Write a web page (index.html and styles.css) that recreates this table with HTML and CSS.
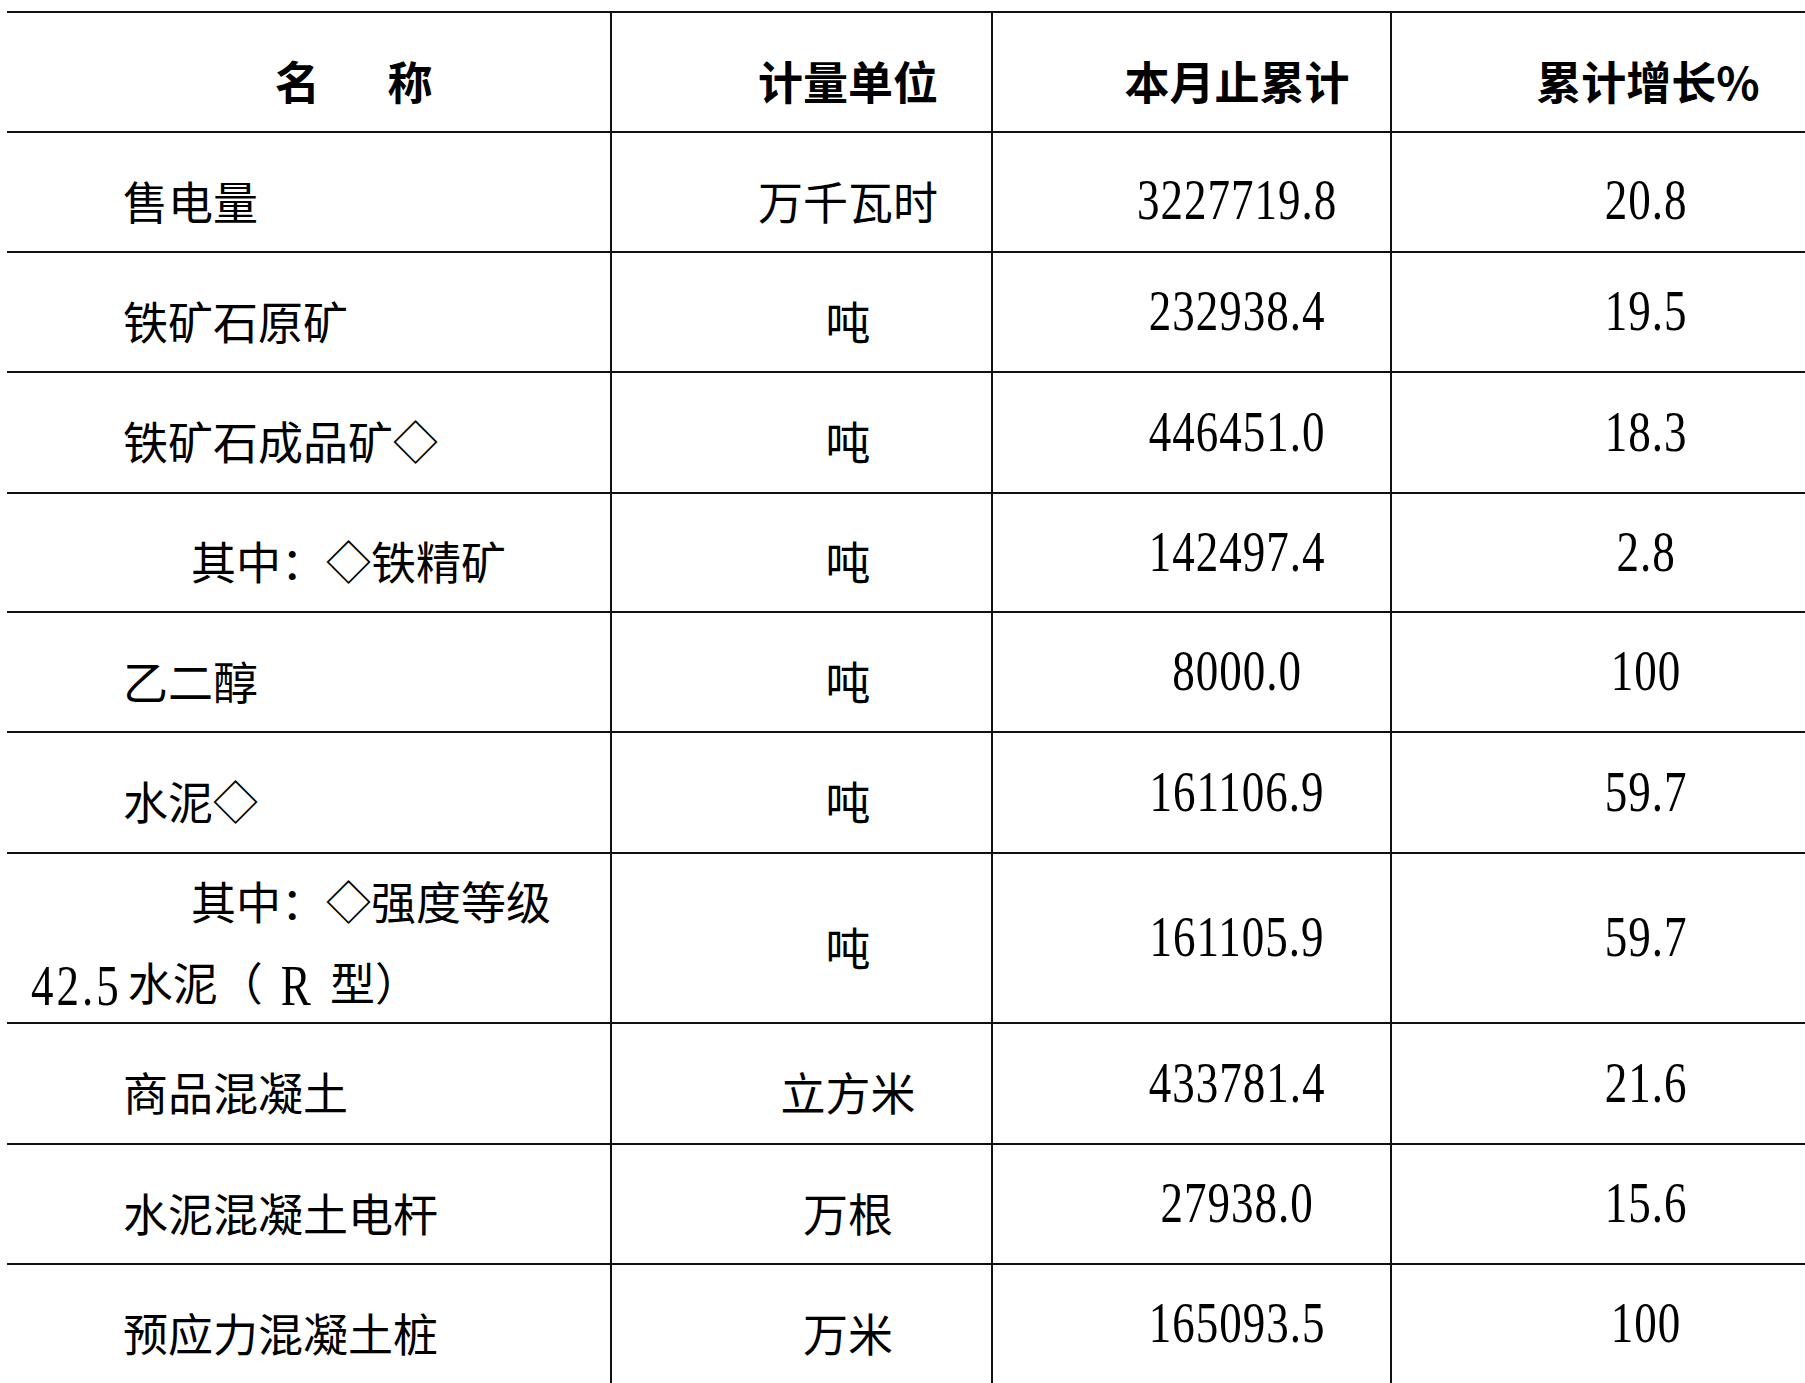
FILE: index.html
```html
<!DOCTYPE html>
<html lang="zh-CN">
<head>
<meta charset="utf-8">
<title>主要产品产量</title>
<link rel="stylesheet" href="styles.css">
</head>
<body>
<table class="sheet">
  <colgroup>
    <col class="c-name"><col class="c-unit"><col class="c-total"><col class="c-growth">
  </colgroup>
  <thead>
    <tr class="h120">
      <th class="name"><span class="lead head-lead">名&emsp;&ensp;称</span></th>
      <th class="unit">计量单位</th>
      <th class="total">本月止累计</th>
      <th class="growth">累计增长<span class="pct">%</span></th>
    </tr>
  </thead>
  <tbody>
    <tr class="h120 first">
      <td class="name"><span class="lead">售电量</span></td>
      <td class="unit">万千瓦时</td>
      <td class="total"><span class="num">3227719.8</span></td>
      <td class="growth"><span class="num">20.8</span></td>
    </tr>
    <tr class="h120">
      <td class="name"><span class="lead">铁矿石原矿</span></td>
      <td class="unit">吨</td>
      <td class="total"><span class="num">232938.4</span></td>
      <td class="growth"><span class="num">19.5</span></td>
    </tr>
    <tr class="h121">
      <td class="name"><span class="lead">铁矿石成品矿◇</span></td>
      <td class="unit">吨</td>
      <td class="total"><span class="num">446451.0</span></td>
      <td class="growth"><span class="num">18.3</span></td>
    </tr>
    <tr class="h119">
      <td class="name"><span class="lead sub">其中：◇铁精矿</span></td>
      <td class="unit">吨</td>
      <td class="total"><span class="num">142497.4</span></td>
      <td class="growth"><span class="num">2.8</span></td>
    </tr>
    <tr class="h120">
      <td class="name"><span class="lead">乙二醇</span></td>
      <td class="unit">吨</td>
      <td class="total"><span class="num">8000.0</span></td>
      <td class="growth"><span class="num">100</span></td>
    </tr>
    <tr class="h121">
      <td class="name"><span class="lead">水泥◇</span></td>
      <td class="unit">吨</td>
      <td class="total"><span class="num">161106.9</span></td>
      <td class="growth"><span class="num">59.7</span></td>
    </tr>
    <tr class="h168">
      <td class="name two"><p class="para">其中：◇强度等级<br><span class="num grade">42.5</span>水泥（ <span class="num">R</span> 型）</p></td>
      <td class="unit">吨</td>
      <td class="total"><span class="num">161105.9</span></td>
      <td class="growth"><span class="num">59.7</span></td>
    </tr>
    <tr class="h121">
      <td class="name"><span class="lead">商品混凝土</span></td>
      <td class="unit">立方米</td>
      <td class="total"><span class="num">433781.4</span></td>
      <td class="growth"><span class="num">21.6</span></td>
    </tr>
    <tr class="h120">
      <td class="name"><span class="lead">水泥混凝土电杆</span></td>
      <td class="unit">万根</td>
      <td class="total"><span class="num">27938.0</span></td>
      <td class="growth"><span class="num">15.6</span></td>
    </tr>
    <tr class="h120">
      <td class="name"><span class="lead">预应力混凝土桩</span></td>
      <td class="unit">万米</td>
      <td class="total"><span class="num">165093.5</span></td>
      <td class="growth"><span class="num">100</span></td>
    </tr>
  </tbody>
</table>
</body>
</html>
```

FILE: styles.css
```css
html {
  overflow: hidden;
  background: #fff;
}

body {
  margin: 0;
  padding: 11px 0 0 7px;
  font-family: "Noto Sans CJK SC", "Noto Sans", sans-serif;
  font-size: 45px;
  color: #000;
}

.sheet {
  border-collapse: collapse;
  table-layout: fixed;
  width: 1813px;
}

.c-name { width: 604px; }
.c-unit { width: 381px; }
.c-total { width: 399px; }
.c-growth { width: 429px; }

.sheet th,
.sheet td {
  border-top: 2px solid #111;
  border-bottom: 2px solid #111;
  border-left: 2px solid #111;
  padding: 16px 0 0 0;
  line-height: 45px;
  vertical-align: middle;
  white-space: nowrap;
  font-weight: 400;
}

.sheet th {
  font-weight: 700;
}

.pct {
  letter-spacing: -4px;
}

.sheet .name {
  border-left: none;
  text-align: left;
  padding-left: 24px;
}

.sheet .unit {
  text-align: center;
  padding-left: 93px;
}

.sheet .total {
  text-align: center;
  padding-left: 91px;
}

.sheet .growth {
  text-align: center;
  padding-left: 80px;
}

.sheet td.total,
.sheet td.growth {
  padding-top: 0;
  padding-bottom: 6px;
}

.sheet tr.first td.total,
.sheet tr.first td.growth {
  padding-top: 11px;
  padding-bottom: 0;
}

.h119 { height: 119px; }
.h120 { height: 120px; }
.h121 { height: 121px; }
.h168 { height: 168px; }

.lead {
  display: block;
  padding-left: 92px;
}

.lead.sub {
  padding-left: 160px;
}

.lead.head-lead {
  padding-left: 244px;
}

.para {
  margin: 0;
  line-height: 81px;
  white-space: normal;
  text-indent: 160px;
  word-spacing: 8px;
}

.sheet td.two {
  padding-top: 6px;
}

.num {
  display: inline-block;
  font-family: "Liberation Serif", "DejaVu Serif", serif;
  font-size: 45px;
  line-height: 45px;
  letter-spacing: 1px;
  transform: scaleY(1.25);
  text-indent: 0;
  word-spacing: 0;
}

.num.grade {
  letter-spacing: 3px;
  margin-right: 6px;
}
```
